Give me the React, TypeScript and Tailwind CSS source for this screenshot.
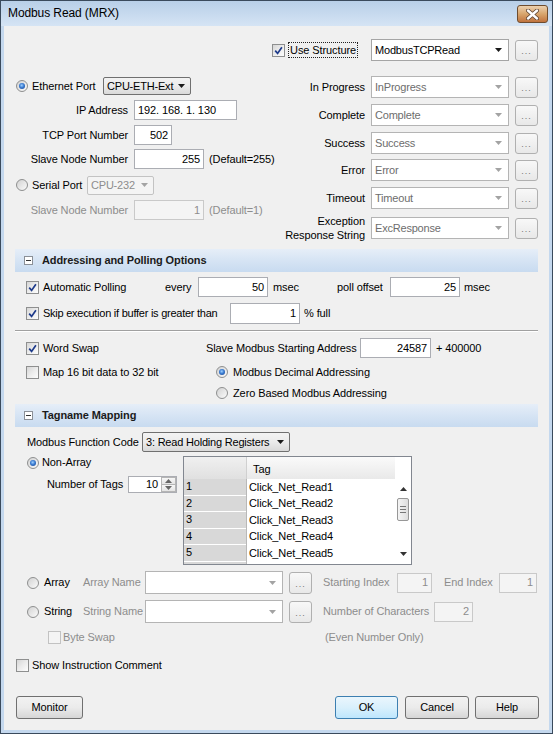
import React from "react";

type Kind = "white" | "whiteDis" | "gray" | "grayDis";

function Arrow({ color = "#000", up = false }: { color?: string; up?: boolean }) {
  return (
    <svg width="7" height="4" viewBox="0 0 7 4" className="shrink-0">
      <path d={up ? "M0 4h7L3.5 0z" : "M0 0h7L3.5 4z"} fill={color} />
    </svg>
  );
}

function Check({ checked = false, disabled = false }: { checked?: boolean; disabled?: boolean }) {
  return (
    <span
      className={`inline-flex h-[13px] w-[13px] shrink-0 items-center justify-center border ${
        disabled
          ? "border-[#c2c2c2] bg-[#f4f4f4]"
          : "border-[#8e8f8f] bg-gradient-to-br from-[#d6d6d6] via-[#ececec] to-[#fdfdfd]"
      }`}
    >
      {checked && (
        <svg width="9" height="9" viewBox="0 0 9 9">
          <path d="M1.2 4.6 L3.6 7.4 L7.9 1.2" stroke="#1d3a8a" strokeWidth="1.7" fill="none" />
        </svg>
      )}
    </span>
  );
}

function Radio({ checked = false }: { checked?: boolean }) {
  return (
    <span className="inline-flex h-[12px] w-[12px] shrink-0 items-center justify-center rounded-full border border-[#8e8f8f] bg-gradient-to-br from-[#d2d2d2] to-[#fbfbfb]">
      {checked && (
        <span className="h-[6px] w-[6px] rounded-full bg-[radial-gradient(circle_at_45%_40%,#9fd0ff_0%,#3a7bd0_45%,#163f8c_100%)]" />
      )}
    </span>
  );
}

function TBox({ v, cls, left = false, disabled = false }: { v: string; cls: string; left?: boolean; disabled?: boolean }) {
  return (
    <div
      className={`flex shrink-0 items-center border px-[3px] ${left ? "justify-start" : "justify-end"} ${
        disabled ? "border-[#c9c9c9] bg-[#f4f4f4] text-[#8d8d8d]" : "border-[#abadb3] bg-white text-black"
      } ${cls}`}
    >
      {v}
    </div>
  );
}

function Combo({ v, cls, kind }: { v: string; cls: string; kind: Kind }) {
  const box =
    kind === "white"
      ? "border-[#a5a5a5] bg-white text-black pl-[3px] pr-[6px]"
      : kind === "whiteDis"
      ? "border-[#b4b4b4] bg-white text-[#6d6d6d] pl-[3px] pr-[6px]"
      : kind === "gray"
      ? "rounded-[2px] border-[#707070] bg-gradient-to-b from-[#f3f3f3] via-[#ebebeb] to-[#d9d9d9] text-black pl-[3px] pr-[5px]"
      : "rounded-[2px] border-[#c3c3c3] bg-[#f4f4f4] text-[#8d8d8d] pl-[3px] pr-[5px]";
  const arrow = kind === "white" || kind === "gray" ? "#1a1a1a" : "#a3a3a3";
  return (
    <div className={`flex shrink-0 items-center justify-between gap-[3px] border ${box} ${cls}`}>
      <span className="whitespace-nowrap tracking-[-0.2px]">{v}</span>
      <Arrow color={arrow} />
    </div>
  );
}

function Dots({ cls }: { cls: string }) {
  return (
    <div
      className={`flex shrink-0 items-end justify-center rounded-[3px] border border-[#b0b0b0] bg-gradient-to-b from-[#f8f8f8] to-[#e8e8e8] pb-[4px] text-[9px] leading-none tracking-[1px] text-[#777] ${cls}`}
    >
      ...
    </div>
  );
}

function Header({ title }: { title: string }) {
  return (
    <div className="mx-[11px] flex h-[23px] shrink-0 items-center bg-gradient-to-b from-[#e6eef8] via-[#d6e4f4] to-[#c8dbf0]">
      <span className="ml-[9px] flex h-[9px] w-[9px] items-center justify-center border border-[#8b9097] bg-white">
        <span className="h-px w-[5px] bg-[#333]" />
      </span>
      <span className="ml-[9px] font-bold text-[#1b1b1b]">{title}</span>
    </div>
  );
}

function Btn({ label, cls, def = false }: { label: string; cls: string; def?: boolean }) {
  return (
    <div
      className={`flex h-[23px] shrink-0 items-center justify-center rounded-[3px] border ${
        def
          ? "border-[#3c7fb1] bg-gradient-to-b from-[#eaf6fd] via-[#d9f0fc] to-[#bee6fd]"
          : "border-[#707070] bg-gradient-to-b from-[#f2f2f2] via-[#ebebeb] to-[#d6d6d6]"
      } ${cls}`}
    >
      {label}
    </div>
  );
}

function Grid() {
  const rows = [1, 2, 3, 4, 5];
  return (
    <div className="flex h-[109px] w-[229px] shrink-0 flex-col border border-[#828790] bg-white">
      <div className="flex h-[22px] shrink-0">
        <div className="w-[62px] bg-gradient-to-b from-[#f0f0f0] to-[#e0e0e0]" />
        <div className="flex w-[149px] items-end border-l border-[#d0d0d0] bg-gradient-to-b from-[#fafafa] to-[#e9e9e9] pb-[3px] pl-[6px]">
          Tag
        </div>
        <div className="flex-1 bg-white" />
      </div>
      <div className="flex h-[85px] overflow-hidden">
        <div className="flex w-[211px] flex-col">
          {rows.map((r) => (
            <div key={r} className="flex h-[16.5px] shrink-0">
              <div className="flex w-[62px] items-center border-b border-white bg-[#d8d8d8] pl-[2px]">{r}</div>
              <div className="flex flex-1 items-center border-l border-[#b8b8b8] pl-[2px]">Click_Net_Read{r}</div>
            </div>
          ))}
          <div className="flex h-[16.5px] shrink-0">
            <div className="w-[62px] bg-[#d8d8d8]" />
            <div className="flex-1 border-l border-[#b8b8b8]" />
          </div>
        </div>
        <div className="flex w-[16px] flex-col items-center bg-white pb-[8px] pt-[8px]">
          <Arrow color="#333" up />
          <div className="mt-[7px] flex h-[23px] w-[12px] flex-col items-center justify-center gap-[2px] rounded-[2px] border border-[#979797] bg-gradient-to-r from-[#f4f4f4] to-[#dedede]">
            <span className="h-px w-[6px] bg-[#777]" />
            <span className="h-px w-[6px] bg-[#777]" />
            <span className="h-px w-[6px] bg-[#777]" />
          </div>
          <div className="flex-1" />
          <Arrow color="#333" />
        </div>
      </div>
    </div>
  );
}

const GRAY = "text-[#8d8d8d]";

export default function App() {
  return (
    <div className="h-[734px] w-[553px] border border-[#3a4a5c] bg-[#c4d8ee] font-['Liberation_Sans',Arial,sans-serif] text-[11px] leading-[13px] tracking-[-0.1px] text-black">
      {/* title bar */}
      <div className="flex h-[25px] items-center justify-between bg-gradient-to-b from-[#b8cfe8] to-[#d5e4f4] pl-[7px] pr-[4px]">
        <span className="text-[12px]">Modbus Read (MRX)</span>
        <div className="mt-[1px] flex h-[18px] w-[31px] items-center justify-center rounded-[3px] border border-[#6e4c2e] bg-gradient-to-b from-[#ecd0ae] via-[#d8a56c] to-[#c0733e]">
          <svg width="13" height="11" viewBox="0 0 13 11">
            <path d="M2 1.5 L11 9.5 M11 1.5 L2 9.5" stroke="#5a4030" strokeWidth="4" strokeLinecap="round" />
            <path d="M2 1.5 L11 9.5 M11 1.5 L2 9.5" stroke="#ffffff" strokeWidth="2.4" strokeLinecap="round" />
          </svg>
        </div>
      </div>

      {/* client area */}
      <div className="mx-[3px] flex h-[704px] flex-col bg-[#f0f0f0]">
        {/* Use Structure row */}
        <div className="mt-[13px] flex h-[22px] shrink-0 items-center justify-end pr-[11px]">
          <Check checked />
          <span className="ml-[3px] border border-dotted border-[#222] px-[1px] leading-[14px]">Use Structure</span>
          <Combo v="ModbusTCPRead" kind="white" cls="ml-[13px] h-[22px] w-[138px]" />
          <Dots cls="ml-[6px] h-[21px] w-[23px]" />
        </div>

        {/* split */}
        <div className="mt-[15px] flex shrink-0">
          <div className="flex w-[276px] shrink-0 flex-col">
            <div className="flex h-[20px] items-center pl-[12px]">
              <Radio checked />
              <span className="ml-[4px] w-[71px] whitespace-nowrap">Ethernet Port</span>
              <Combo v="CPU-ETH-Ext" kind="gray" cls="h-[18px] w-[88px]" />
            </div>
            <div className="mt-[4px] flex h-[20px] items-center">
              <span className="w-[124px] text-right">IP Address</span>
              <TBox v="192. 168. 1. 130" left cls="ml-[6px] h-[20px] w-[103px]" />
            </div>
            <div className="mt-[5px] flex h-[20px] items-center">
              <span className="w-[124px] text-right">TCP Port Number</span>
              <TBox v="502" cls="ml-[6px] h-[20px] w-[38px]" />
            </div>
            <div className="mt-[4px] flex h-[20px] items-center">
              <span className="w-[124px] text-right">Slave Node Number</span>
              <TBox v="255" cls="ml-[6px] h-[20px] w-[70px]" />
              <span className="ml-[5px] whitespace-nowrap">(Default=255)</span>
            </div>
            <div className="mt-[6px] flex h-[20px] items-center pl-[12px]">
              <Radio />
              <span className="ml-[4px] w-[55px] whitespace-nowrap">Serial Port</span>
              <Combo v="CPU-232" kind="grayDis" cls="h-[19px] w-[67px]" />
            </div>
            <div className="mt-[5px] flex h-[20px] items-center">
              <span className={`w-[124px] text-right ${GRAY}`}>Slave Node Number</span>
              <TBox v="1" disabled cls="ml-[6px] h-[20px] w-[70px]" />
              <span className={`ml-[5px] whitespace-nowrap ${GRAY}`}>(Default=1)</span>
            </div>
          </div>

          <div className="flex flex-1 flex-col items-end pr-[11px]">
            {[
              ["In Progress", "InProgress", 0],
              ["Complete", "Complete", 6],
              ["Success", "Success", 6],
              ["Error", "Error", 5],
              ["Timeout", "Timeout", 6],
            ].map(([l, v, m]) => (
              <div
                key={l as string}
                className={`flex h-[22px] items-center ${m === 6 ? "mt-[6px]" : m === 5 ? "mt-[5px]" : ""}`}
              >
                <span className="whitespace-nowrap text-right">{l}</span>
                <Combo v={v as string} kind="whiteDis" cls="ml-[6px] h-[22px] w-[138px]" />
                <Dots cls="ml-[6px] h-[21px] w-[23px]" />
              </div>
            ))}
            <div className="mt-[8px] flex h-[22px] items-center">
              <span className="whitespace-nowrap text-right leading-[14px]">
                Exception
                <br />
                Response String
              </span>
              <Combo v="ExcResponse" kind="whiteDis" cls="ml-[6px] h-[22px] w-[138px]" />
              <Dots cls="ml-[6px] h-[21px] w-[23px]" />
            </div>
          </div>
        </div>

        {/* Addressing and Polling */}
        <div className="mt-[10px]">
          <Header title="Addressing and Polling Options" />
        </div>
        <div className="mt-[5px] flex h-[20px] shrink-0 items-center pl-[22px]">
          <Check checked />
          <span className="ml-[4px] w-[122px]">Automatic Polling</span>
          <span className="w-[33px]">every</span>
          <TBox v="50" cls="h-[20px] w-[70px]" />
          <span className="ml-[5px] w-[64px]">msec</span>
          <span className="w-[53px] whitespace-nowrap">poll offset</span>
          <TBox v="25" cls="h-[20px] w-[70px]" />
          <span className="ml-[4px]">msec</span>
        </div>
        <div className="mt-[6px] flex h-[21px] shrink-0 items-center pl-[22px]">
          <Check checked />
          <span className="ml-[4px] w-[187px] whitespace-nowrap tracking-[-0.25px]">Skip execution if buffer is greater than</span>
          <TBox v="1" cls="h-[21px] w-[70px]" />
          <span className="ml-[4px]">% full</span>
        </div>
        <div className="mx-[11px] mt-[6px] h-[2px] shrink-0 border-b border-t border-b-white border-t-[#a0a0a0]" />
        <div className="mt-[6px] flex h-[20px] shrink-0 items-center pl-[22px]">
          <Check checked />
          <span className="ml-[4px] w-[163px]">Word Swap</span>
          <span className="w-[154px] whitespace-nowrap">Slave Modbus Starting Address</span>
          <TBox v="24587" cls="h-[20px] w-[71px]" />
          <span className="ml-[5px]">+ 400000</span>
        </div>
        <div className="mt-[6px] flex h-[16px] shrink-0 items-center pl-[22px]">
          <Check />
          <span className="ml-[4px] w-[173px]">Map 16 bit data to 32 bit</span>
          <Radio checked />
          <span className="ml-[5px]">Modbus Decimal Addressing</span>
        </div>
        <div className="mt-[5px] flex h-[16px] shrink-0 items-center pl-[212px]">
          <Radio />
          <span className="ml-[5px]">Zero Based Modbus Addressing</span>
        </div>

        {/* Tagname Mapping */}
        <div className="mt-[3px]">
          <Header title="Tagname Mapping" />
        </div>
        <div className="mt-[5px] flex h-[20px] shrink-0 items-center pl-[23px]">
          <span className="w-[115px] whitespace-nowrap">Modbus Function Code</span>
          <Combo v="3: Read Holding Registers" kind="gray" cls="h-[20px] w-[148px]" />
        </div>
        <div className="mt-[4px] flex h-[109px] shrink-0">
          <div className="flex w-[179px] shrink-0 flex-col">
            <div className="flex h-[13px] items-center pl-[23px]">
              <Radio checked />
              <span className="ml-[3px]">Non-Array</span>
            </div>
            <div className="mt-[7px] flex h-[17px] items-center pl-[43px]">
              <span className="w-[81px] whitespace-nowrap">Number of Tags</span>
              <div className="flex h-[17px] w-[49px] border border-[#abadb3] bg-white">
                <div className="flex flex-1 items-center justify-end pr-[3px]">10</div>
                <div className="flex w-[15px] flex-col">
                  <div className="flex flex-1 items-center justify-center border border-[#b5b5b5] bg-gradient-to-b from-[#f7f7f7] to-[#e4e4e4]">
                    <Arrow color="#666" up />
                  </div>
                  <div className="flex flex-1 items-center justify-center border border-t-0 border-[#b5b5b5] bg-gradient-to-b from-[#f7f7f7] to-[#e4e4e4]">
                    <Arrow color="#666" />
                  </div>
                </div>
              </div>
            </div>
          </div>
          <Grid />
        </div>

        <div className="mt-[6px] flex h-[23px] shrink-0 items-center pl-[23px]">
          <Radio />
          <span className="ml-[5px] w-[39px]">Array</span>
          <span className={`w-[62px] ${GRAY}`}>Array Name</span>
          <Combo v="" kind="whiteDis" cls="h-[23px] w-[138px]" />
          <Dots cls="ml-[6px] h-[22px] w-[23px]" />
          <span className={`ml-[11px] w-[74px] whitespace-nowrap ${GRAY}`}>Starting Index</span>
          <TBox v="1" disabled cls="h-[20px] w-[35px]" />
          <span className={`ml-[12px] w-[55px] whitespace-nowrap ${GRAY}`}>End Index</span>
          <TBox v="1" disabled cls="h-[20px] w-[38px]" />
        </div>
        <div className="mt-[6px] flex h-[23px] shrink-0 items-center pl-[23px]">
          <Radio />
          <span className="ml-[5px] w-[39px]">String</span>
          <span className={`w-[62px] whitespace-nowrap ${GRAY}`}>String Name</span>
          <Combo v="" kind="whiteDis" cls="h-[23px] w-[138px]" />
          <Dots cls="ml-[6px] h-[22px] w-[23px]" />
          <span className={`ml-[11px] w-[111px] whitespace-nowrap ${GRAY}`}>Number of Characters</span>
          <TBox v="2" disabled cls="h-[20px] w-[39px]" />
        </div>
        <div className="mt-[6px] flex h-[16px] shrink-0 items-center pl-[44px]">
          <Check disabled />
          <span className={`ml-[2px] w-[262px] ${GRAY}`}>Byte Swap</span>
          <span className={`whitespace-nowrap ${GRAY}`}>(Even Number Only)</span>
        </div>
        <div className="mt-[12px] flex h-[16px] shrink-0 items-center pl-[12px]">
          <Check />
          <span className="ml-[3px]">Show Instruction Comment</span>
        </div>

        <div className="mt-[23px] flex shrink-0 items-center justify-between pl-[12px] pr-[10px]">
          <Btn label="Monitor" cls="w-[67px]" />
          <div className="flex">
            <Btn label="OK" def cls="w-[63px]" />
            <Btn label="Cancel" cls="ml-[7px] w-[64px]" />
            <Btn label="Help" cls="ml-[6px] w-[64px]" />
          </div>
        </div>
      </div>
    </div>
  );
}
